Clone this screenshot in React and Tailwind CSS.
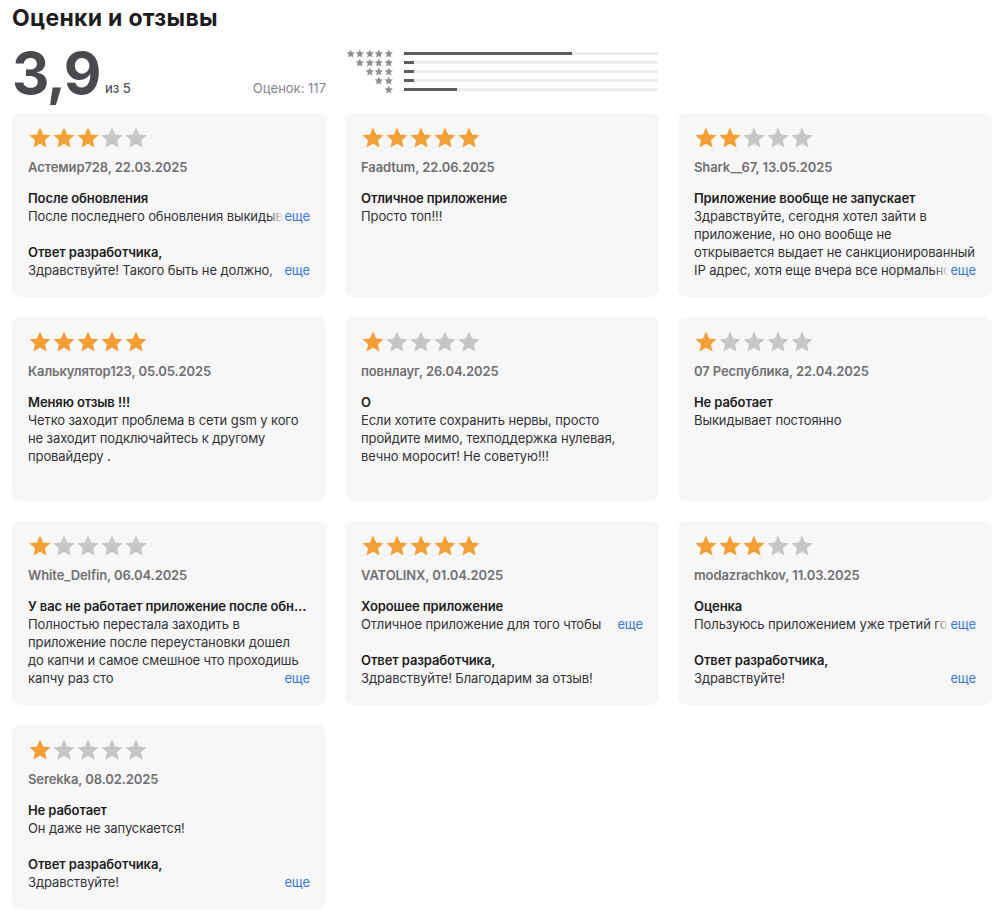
import React from 'react';

const ORANGE = '#f4a038';
const GRAY = '#c6c6c6';

const STAR = 'M12 1.4l3.1 7 7.5.75-5.65 5.05 1.62 7.4L12 17.85l-6.57 3.75 1.62-7.4L1.4 9.15l7.5-.75z';

const reviews = [
    {
        stars: 3,
        author: 'Астемир728, 22.03.2025',
        title: 'После обновления',
        body: ['После последнего обновления выкидывает'],
        bodyMore: true,
        reply: ['Здравствуйте! Такого быть не должно,'],
        replyMore: true,
    },
    {
        stars: 5,
        author: 'Faadtum, 22.06.2025',
        title: 'Отличное приложение',
        body: ['Просто топ!!!'],
    },
    {
        stars: 2,
        author: 'Shark__67, 13.05.2025',
        title: 'Приложение вообще не запускает',
        body: [
            'Здравствуйте, сегодня хотел зайти в',
            'приложение, но оно вообще не',
            'открывается выдает не санкционированный',
            'IP адрес, хотя еще вчера все нормально',
        ],
        bodyMore: true,
    },
    {
        stars: 5,
        author: 'Калькулятор123, 05.05.2025',
        title: 'Меняю отзыв !!!',
        body: [
            'Четко заходит проблема в сети gsm у кого',
            'не заходит подключайтесь к другому',
            'провайдеру .',
        ],
    },
    {
        stars: 1,
        author: 'повнлауг, 26.04.2025',
        title: 'О',
        body: [
            'Если хотите сохранить нервы, просто',
            'пройдите мимо, техподдержка нулевая,',
            'вечно моросит! Не советую!!!',
        ],
    },
    {
        stars: 1,
        author: '07 Республика, 22.04.2025',
        title: 'Не работает',
        body: ['Выкидывает постоянно'],
    },
    {
        stars: 1,
        author: 'White_Delfin, 06.04.2025',
        title: 'У вас не работает приложение после обновления',
        body: [
            'Полностью перестала заходить в',
            'приложение после переустановки дошел',
            'до капчи и самое смешное что проходишь',
            'капчу раз сто',
        ],
        bodyMore: true,
    },
    {
        stars: 5,
        author: 'VATOLINX, 01.04.2025',
        title: 'Хорошее приложение',
        body: ['Отличное приложение для того чтобы'],
        bodyMore: true,
        reply: ['Здравствуйте! Благодарим за отзыв!'],
    },
    {
        stars: 3,
        author: 'modazrachkov, 11.03.2025',
        title: 'Оценка',
        body: ['Пользуюсь приложением уже третий год'],
        bodyMore: true,
        reply: ['Здравствуйте!'],
        replyMore: true,
    },
    {
        stars: 1,
        author: 'Serekka, 08.02.2025',
        title: 'Не работает',
        body: ['Он даже не запускается!'],
        reply: ['Здравствуйте!'],
        replyMore: true,
    },
];

const histogram = [
    { stars: 5, pct: 66 },
    { stars: 4, pct: 4 },
    { stars: 3, pct: 4 },
    { stars: 2, pct: 4 },
    { stars: 1, pct: 21 },
];

const Star = ({ color, size = 24 }) => (
    <svg width={size} height={size} viewBox="0 0 24 24" className="block shrink-0">
        <path d={STAR} fill={color} />
    </svg>
);

const Stars = ({ count }) => (
    <div className="flex">
        {[0, 1, 2, 3, 4].map((i) => (
            <Star key={i} color={i < count ? ORANGE : GRAY} />
        ))}
    </div>
);

// each line is kept as written; the last one can end in a faded "еще" link
const Lines = ({ lines, more }) => (
    <div>
        {lines.map((line, i) => (
            <div key={i} className="relative overflow-hidden whitespace-nowrap">
                {line}
                {more && i === lines.length - 1 && (
                    <span className="absolute right-0 top-0 flex">
                        <span className="w-[14px] bg-linear-to-r from-[#f7f7f700] to-[#f7f7f7]" />
                        <span className="bg-[#f7f7f7] pl-[1px] text-[#3b7ad6]">еще</span>
                    </span>
                )}
            </div>
        ))}
    </div>
);

const ReviewCard = ({ review }) => (
    <div className="h-[184px] rounded-lg bg-[#f7f7f7] px-4 pt-[13px] text-[13px] leading-[18px] tracking-[-0.1px]">
        <Stars count={review.stars} />
        <div className="mt-[8px] font-semibold text-[#707072]">{review.author}</div>
        <div className="mt-[13px] truncate font-semibold text-[#1d1d1f]">{review.title}</div>
        <div className="text-[#333336]">
            <Lines lines={review.body} more={review.bodyMore} />
        </div>
        {review.reply && (
            <div className="mt-[18px]">
                <div className="font-semibold text-[#1d1d1f]">Ответ разработчика,</div>
                <div className="text-[#333336]">
                    <Lines lines={review.reply} more={review.replyMore} />
                </div>
            </div>
        )}
    </div>
);

export default function App() {
    return (
        <div
            className="min-h-screen bg-white px-3 pt-[4px] pb-4 text-[#1d1d1f]"
            style={{ fontFamily: 'Inter, "Noto Sans", sans-serif' }}
        >
            <h2 className="text-[23px] leading-[28px] font-bold tracking-[0.3px]">Оценки и отзывы</h2>

            <div className="mt-[11px] grid grid-cols-[314px_314px] gap-x-[20px]">
                <div className="flex items-end">
                    <div className="text-[58px] leading-[60px] font-bold tracking-[-1.5px] text-[#4a4a4e]">3,9</div>
                    <div className="ml-[5px] mb-[5px] text-[13px] font-medium text-[#56565a]">из 5</div>
                    <div className="ml-auto mb-[5px] text-[13px] text-[#86868b]">Оценок: 117</div>
                </div>
                <div className="flex flex-col pt-[6px]">
                    {histogram.map((row) => (
                        <div key={row.stars} className="flex h-[9px] items-center">
                            <div className="flex w-[47px] justify-end">
                                {Array.from({ length: row.stars }).map((_, i) => (
                                    <Star key={i} color="#8e8e93" size={9.5} />
                                ))}
                            </div>
                            <div className="ml-[11px] h-[3px] w-[254px] bg-[#ececee]">
                                <div className="h-full bg-[#5e5e62]" style={{ width: `${row.pct}%` }} />
                            </div>
                        </div>
                    ))}
                </div>
            </div>

            <div className="mt-[10px] grid grid-cols-[314px_314px_314px] gap-x-[19px] gap-y-[20px]">
                {reviews.map((r, i) => (
                    <ReviewCard key={i} review={r} />
                ))}
            </div>
        </div>
    );
}
